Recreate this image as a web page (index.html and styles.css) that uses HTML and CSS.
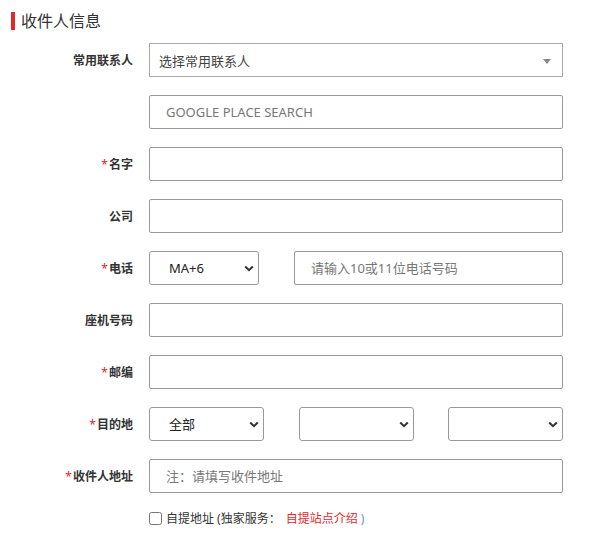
FILE: index.html
```html
<!DOCTYPE html>
<html lang="zh-CN">
<head>
<meta charset="utf-8">
<title>收件人信息</title>
<link rel="stylesheet" href="styles.css">
</head>
<body>
<div class="page">
  <h2 class="title">收件人信息</h2>
  <div class="form">
    <label class="lbl">常用联系人</label>
    <div class="chosen"><span>选择常用联系人</span><span class="tri"></span></div>

    <span class="lbl"></span>
    <input class="txt" type="text" placeholder="GOOGLE PLACE SEARCH">

    <label class="lbl"><i>*</i>名字</label>
    <input class="txt" type="text">

    <label class="lbl">公司</label>
    <input class="txt" type="text">

    <label class="lbl"><i>*</i>电话</label>
    <div class="pair">
      <div class="sel w110"><select><option>MA+6</option></select><svg class="chev" width="10" height="7" viewBox="0 0 10 7"><path d="M1.2 1.5 L5 5.2 L8.8 1.5" fill="none" stroke="#333" stroke-width="2"/></svg></div>
      <input class="txt phone" type="text" placeholder="请输入10或11位电话号码">
    </div>

    <label class="lbl">座机号码</label>
    <input class="txt" type="text">

    <label class="lbl"><i>*</i>邮编</label>
    <input class="txt" type="text">

    <label class="lbl"><i>*</i>目的地</label>
    <div class="triple">
      <div class="sel w115"><select><option>全部</option></select><svg class="chev" width="10" height="7" viewBox="0 0 10 7"><path d="M1.2 1.5 L5 5.2 L8.8 1.5" fill="none" stroke="#333" stroke-width="2"/></svg></div>
      <div class="sel w115"><select><option></option></select><svg class="chev" width="10" height="7" viewBox="0 0 10 7"><path d="M1.2 1.5 L5 5.2 L8.8 1.5" fill="none" stroke="#333" stroke-width="2"/></svg></div>
      <div class="sel w115"><select><option></option></select><svg class="chev" width="10" height="7" viewBox="0 0 10 7"><path d="M1.2 1.5 L5 5.2 L8.8 1.5" fill="none" stroke="#333" stroke-width="2"/></svg></div>
    </div>

    <label class="lbl"><i>*</i>收件人地址</label>
    <input class="txt" type="text" placeholder="注：请填写收件地址">

    <span class="lbl short"></span>
    <label class="check"><input type="checkbox"><span>自提地址 (独家服务：</span><a class="red">自提站点介绍</a><span class="paren">)</span></label>
  </div>
</div>
</body>
</html>
```

FILE: styles.css
```css
* { box-sizing: border-box; }
body {
  margin: 0;
  background: #fff;
  font-family: "Noto Sans", "Noto Sans CJK SC", sans-serif;
  color: #333;
}
.page {
  padding: 12px 0 0 0;
}
.title {
  margin: 0 0 9px 11px;
  padding-left: 6px;
  border-left: 4px solid #e4262d;
  font-size: 16px;
  font-weight: normal;
  line-height: 18px;
  height: 18px;
  color: #333;
  display: flex;
  align-items: center;
}
.form {
  display: grid;
  grid-template-columns: 133px 414px;
  column-gap: 16px;
  row-gap: 18px;
  grid-auto-rows: 34px;
  padding-top: 4px;
}
.lbl {
  display: flex;
  align-items: center;
  justify-content: flex-end;
  font-size: 12px;
  font-weight: bold;
  color: #333;
}
.lbl i {
  font-style: normal;
  font-weight: normal;
  color: #e4262d;
  margin-right: 1px;
}
.txt {
  height: 34px;
  width: 100%;
  border: 1px solid #999;
  border-radius: 2px;
  padding: 0 0 0 16px;
  font-family: inherit;
  font-size: 13px;
  color: #333;
  outline: none;
}
.txt::placeholder { color: #777; }
.chosen {
  height: 34px;
  border: 1px solid #aaa;
  display: flex;
  align-items: center;
  justify-content: space-between;
  padding: 0 11px 0 9px;
  font-size: 13px;
  color: #444;
}
.tri {
  width: 0;
  height: 0;
  border-left: 4px solid transparent;
  border-right: 4px solid transparent;
  border-top: 5px solid #888;
  margin-top: 2px;
}
.pair {
  display: flex;
  justify-content: space-between;
}
.phone { width: 269px; }
.triple {
  display: flex;
  justify-content: space-between;
}
.sel {
  position: relative;
  height: 34px;
}
.w110 { width: 110px; }
.w115 { width: 115px; }
.sel select {
  appearance: none;
  -webkit-appearance: none;
  width: 100%;
  height: 34px;
  border: 1px solid #999;
  border-radius: 3px;
  background: #fff;
  padding: 0 0 0 19px;
  font-family: inherit;
  font-size: 13px;
  color: #222;
  outline: none;
}
.chev {
  position: absolute;
  right: 5px;
  top: 14px;
  pointer-events: none;
}
.form .short { height: 14px; }
.check {
  display: flex;
  align-items: center;
  font-size: 12px;
  color: #333;
  height: 14px;
  align-self: start;
}
.check input {
  margin: 0 4px 0 0;
  width: 13px;
  height: 13px;
}
.red { color: #e4262d; margin-left: 5px; }
.paren { color: #6f8fbf; margin-left: 3px; }
```
